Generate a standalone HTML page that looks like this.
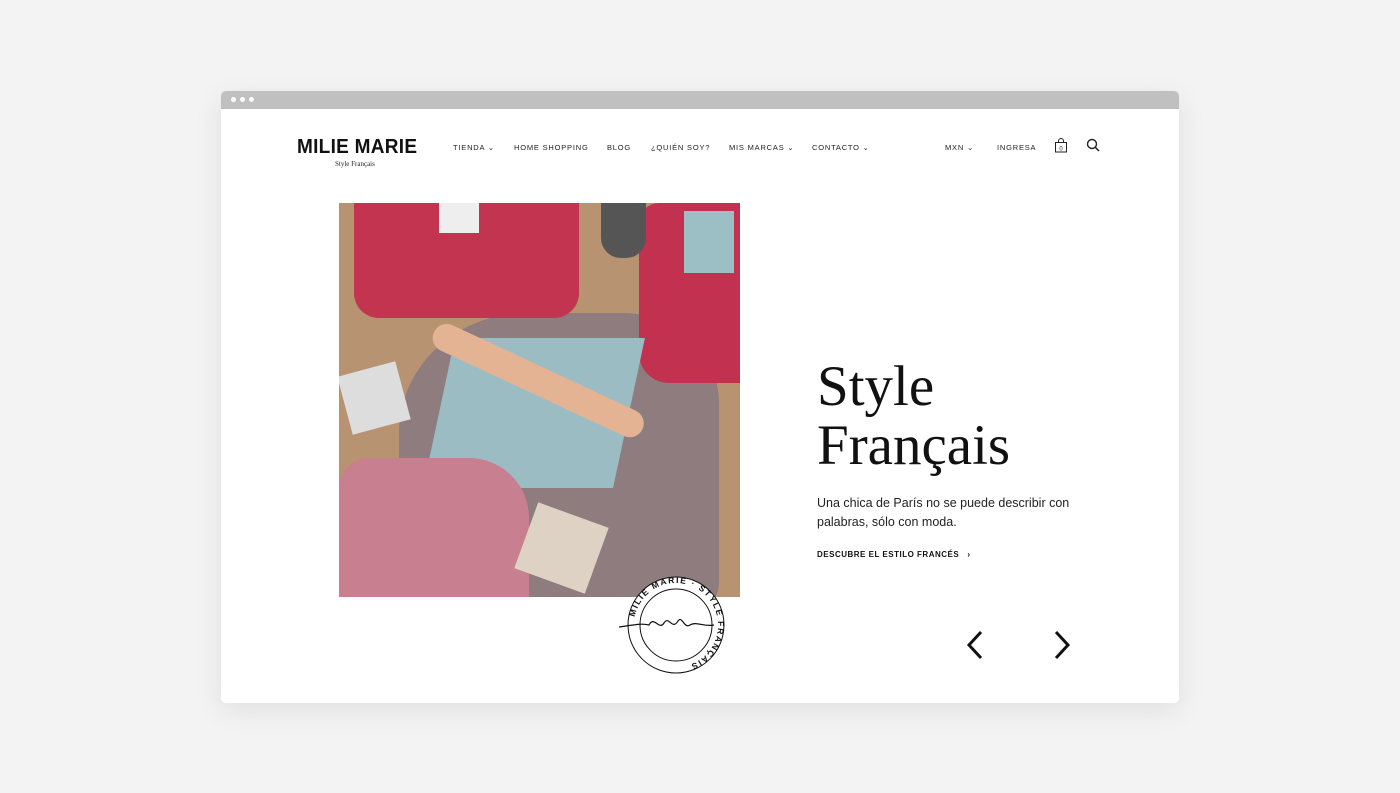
<!DOCTYPE html>
<html><head><meta charset="utf-8"><style>
*{margin:0;padding:0;box-sizing:border-box}
body{width:1400px;height:793px;background:#f3f3f3;position:relative;overflow:hidden;font-family:"Liberation Sans",sans-serif}
.win{position:absolute;left:221px;top:91px;width:958px;height:612px;background:#fff;border-radius:5px;box-shadow:0 8px 30px rgba(0,0,0,.08);overflow:hidden}
.bar{height:18px;background:#c0c0c0;position:relative}
.bar i{position:absolute;top:6px;width:5px;height:5px;border-radius:50%;background:#fff}
.nav{position:absolute;top:52px;font-size:7.5px;letter-spacing:.8px;color:#222;white-space:nowrap}
.abs{position:absolute}
</style></head><body>
<div class="win">
<div class="bar"><i style="left:10px"></i><i style="left:19px"></i><i style="left:28px"></i></div>
<div class="abs" style="left:76px;top:45px;font-size:20px;font-weight:bold;letter-spacing:.3px;color:#111;transform:scaleX(.95);transform-origin:left">MILIE MARIE</div>
<div class="abs" style="left:114px;top:69px;font-size:7px;font-family:'Liberation Serif',serif;color:#222">Style Français</div>
<div class="nav" style="left:232px">TIENDA ⌄</div>
<div class="nav" style="left:293px">HOME SHOPPING</div>
<div class="nav" style="left:386px">BLOG</div>
<div class="nav" style="left:430px">¿QUIÉN SOY?</div>
<div class="nav" style="left:508px">MIS MARCAS ⌄</div>
<div class="nav" style="left:591px">CONTACTO ⌄</div>
<div class="nav" style="left:724px">MXN ⌄</div>
<div class="nav" style="left:776px">INGRESA</div>
<svg class="abs" style="left:833px;top:47px" width="14" height="15" viewBox="0 0 14 15"><rect x="1.5" y="4.5" width="11" height="9.5" fill="none" stroke="#222"/><path d="M4.5 4.5V3a2.5 2.5 0 015 0v1.5" fill="none" stroke="#222"/><text x="7" y="12.5" font-size="6" text-anchor="middle" fill="#222">0</text></svg>
<svg class="abs" style="left:865px;top:47px" width="14" height="14"><circle cx="6" cy="6" r="4.5" fill="none" stroke="#222" stroke-width="1.4"/><path d="M9.3 9.3L13 13" stroke="#222" stroke-width="1.5"/></svg>
<div class="abs" style="left:118px;top:112px;width:401px;height:394px;background:#b89372;overflow:hidden">
 <div class="abs" style="left:60px;top:110px;width:320px;height:300px;background:#8e7c7e;border-radius:40% 30% 10% 20%"></div>
 <div class="abs" style="left:15px;top:0;width:225px;height:115px;background:#c2344f;border-radius:0 0 25px 25px"></div>
 <div class="abs" style="left:100px;top:0;width:40px;height:30px;background:#eee"></div>
 <div class="abs" style="left:300px;top:0;width:101px;height:180px;background:#c23250;border-radius:20px 0 0 30px"></div>
 <div class="abs" style="left:345px;top:8px;width:50px;height:62px;background:#9bbfc4"></div>
 <div class="abs" style="left:262px;top:0;width:45px;height:55px;background:#555;border-radius:0 0 20px 20px"></div>
 <div class="abs" style="left:100px;top:135px;width:190px;height:150px;background:#9cbcc4;transform:skewX(-12deg)"></div>
 <div class="abs" style="left:95px;top:115px;width:230px;height:28px;background:#e3b394;border-radius:20px;transform:rotate(25deg);transform-origin:left"></div>
 <div class="abs" style="left:0;top:255px;width:190px;height:139px;background:#c87f90;border-radius:30px 60px 0 0"></div>
 <div class="abs" style="left:185px;top:310px;width:75px;height:70px;background:#ddd2c4;transform:rotate(20deg)"></div>
 <div class="abs" style="left:5px;top:165px;width:60px;height:60px;background:#ddd;transform:rotate(-15deg)"></div>
</div>
<svg class="abs" style="left:393px;top:484px" width="130" height="105" viewBox="0 0 130 105">
 <defs><path id="c" d="M62 50 m-42 0 a42 42 0 1 1 84 0 a42 42 0 1 1 -84 0"/></defs>
 <circle cx="62" cy="50" r="48" fill="#fff" stroke="#111" stroke-width="1"/>
 <circle cx="62" cy="50" r="36" fill="none" stroke="#111" stroke-width="1"/>
 <text font-size="8.5" font-weight="bold" letter-spacing="1.5" fill="#111"><textPath href="#c" startOffset="3%">MILIE MARIE · STYLE FRANÇAIS</textPath></text>
 <path d="M5 52 C20 50 28 48 35 50 C40 40 45 56 50 48 C55 40 58 56 64 46 C68 40 70 54 76 50 C82 46 90 52 100 50" fill="none" stroke="#111" stroke-width="1.2"/>
</svg>
<div class="abs" style="left:596px;top:266px;font-family:'Liberation Serif',serif;font-size:57px;line-height:59px;color:#111">Style<br>Français</div>
<div class="abs" style="left:596px;top:403px;font-size:12.5px;line-height:19px;color:#222;width:260px">Una chica de París no se puede describir con palabras, sólo con moda.</div>
<div class="abs" style="left:596px;top:459px;font-size:8px;font-weight:bold;letter-spacing:.5px;color:#111">DESCUBRE EL ESTILO FRANCÉS &nbsp;&nbsp;›</div>
<svg class="abs" style="left:745px;top:539px" width="110" height="30"><path d="M15 2L3 15L15 28" fill="none" stroke="#111" stroke-width="3"/><path d="M90 2L102 15L90 28" fill="none" stroke="#111" stroke-width="3"/></svg>
</div>
</body></html>
